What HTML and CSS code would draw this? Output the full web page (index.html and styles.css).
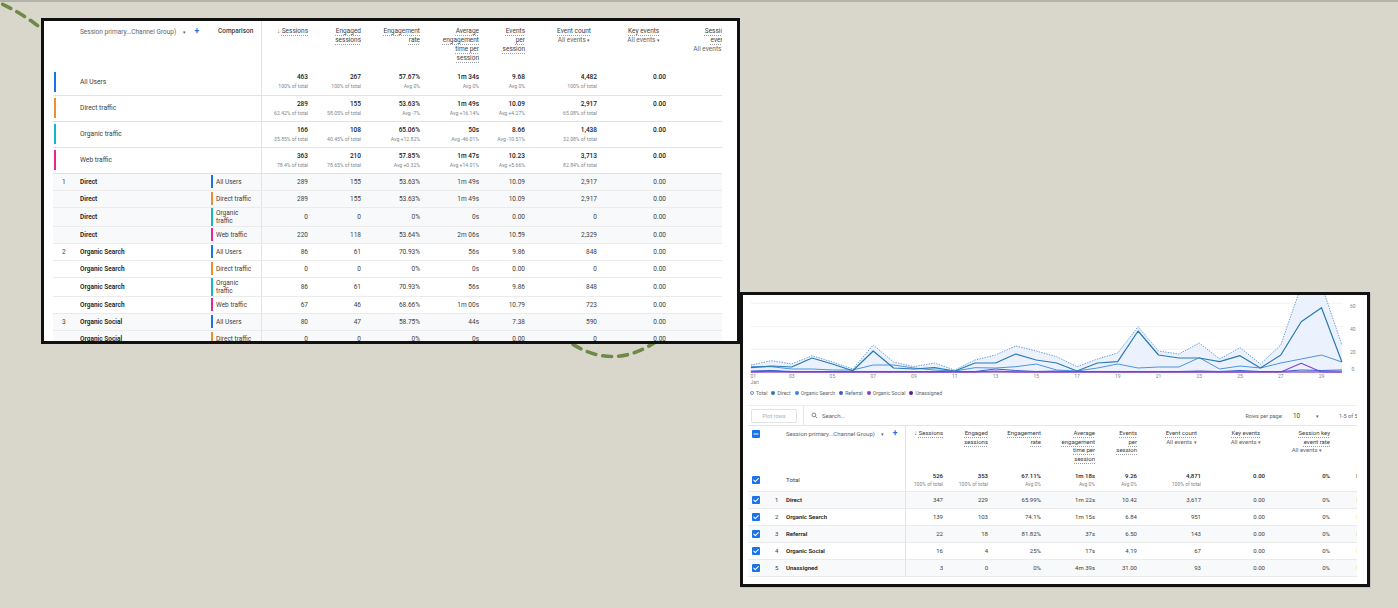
FILE: index.html
```html
<!DOCTYPE html>
<html>
<head>
<meta charset="utf-8">
<link rel="stylesheet" href="styles.css">
</head>
<body>
<div class="stage">
  <svg class="deco" width="1398" height="608" viewBox="0 0 1398 608">
    <path d="M -12 -2 Q 20 10 48 34" class="dash"/>
    <path d="M 560 335 Q 612 378 665 335" class="dash"/>
  </svg>

  <section class="panel panel-left">
    <div class="lt-wrap">
      <table class="lt">
        <colgroup>
          <col class="lw22"><col class="lw133"><col class="lw53"><col class="lw51"><col class="lw53"><col class="lw59"><col class="lw59"><col class="lw46"><col class="lw72"><col class="lw69"><col class="lw69">
        </colgroup>
        <thead>
          <tr class="hd">
            <th></th>
            <th class="dimh">Session primary...Channel Group) <span class="caret">▾</span> <span class="plus">+</span></th>
            <th class="cmph">Comparison</th>
            <th class="num dv"><span class="arr">↓</span> <span class="u">Sessions</span></th>
            <th class="num"><span class="u">Engaged</span><br><span class="u">sessions</span></th>
            <th class="num"><span class="u">Engagement</span><br><span class="u">rate</span></th>
            <th class="num"><span class="u">Average</span><br><span class="u">engagement</span><br><span class="u">time per</span><br><span class="u">session</span></th>
            <th class="num"><span class="u">Events</span><br><span class="u">per</span><br><span class="u">session</span></th>
            <th class="num"><span class="ddh"><span class="u">Event count</span><br><span class="dd">All events <span class="caret">▾</span></span></span></th>
            <th class="num"><span class="ddh"><span class="u">Key events</span><br><span class="dd">All events <span class="caret">▾</span></span></span></th>
            <th class="num lastc"><span class="u">Session key</span><br><span class="u">event rate</span><br><span class="dd ddr">All events <span class="caret">▾</span></span></th>
          </tr>
        </thead>
        <tbody>
          <tr class="sum">
            <td><span class="cbar k-blue"></span></td><td class="nm">All Users</td><td></td>
            <td class="num dv"><div class="v">463</div><div class="s">100% of total</div></td>
            <td class="num"><div class="v">267</div><div class="s">100% of total</div></td>
            <td class="num"><div class="v">57.67%</div><div class="s">Avg 0%</div></td>
            <td class="num"><div class="v">1m 34s</div><div class="s">Avg 0%</div></td>
            <td class="num"><div class="v">9.68</div><div class="s">Avg 0%</div></td>
            <td class="num"><div class="v">4,482</div><div class="s">100% of total</div></td>
            <td class="num"><div class="v">0.00</div></td><td></td>
          </tr>
          <tr class="sum">
            <td><span class="cbar k-orange"></span></td><td class="nm">Direct traffic</td><td></td>
            <td class="num dv"><div class="v">289</div><div class="s">62.42% of total</div></td>
            <td class="num"><div class="v">155</div><div class="s">58.05% of total</div></td>
            <td class="num"><div class="v">53.63%</div><div class="s">Avg -7%</div></td>
            <td class="num"><div class="v">1m 49s</div><div class="s">Avg +16.14%</div></td>
            <td class="num"><div class="v">10.09</div><div class="s">Avg +4.27%</div></td>
            <td class="num"><div class="v">2,917</div><div class="s">65.08% of total</div></td>
            <td class="num"><div class="v">0.00</div></td><td></td>
          </tr>
          <tr class="sum">
            <td><span class="cbar k-teal"></span></td><td class="nm">Organic traffic</td><td></td>
            <td class="num dv"><div class="v">166</div><div class="s">35.85% of total</div></td>
            <td class="num"><div class="v">108</div><div class="s">40.45% of total</div></td>
            <td class="num"><div class="v">65.06%</div><div class="s">Avg +12.82%</div></td>
            <td class="num"><div class="v">50s</div><div class="s">Avg -46.01%</div></td>
            <td class="num"><div class="v">8.66</div><div class="s">Avg -10.51%</div></td>
            <td class="num"><div class="v">1,438</div><div class="s">32.08% of total</div></td>
            <td class="num"><div class="v">0.00</div></td><td></td>
          </tr>
          <tr class="sum">
            <td><span class="cbar k-pink"></span></td><td class="nm">Web traffic</td><td></td>
            <td class="num dv"><div class="v">363</div><div class="s">78.4% of total</div></td>
            <td class="num"><div class="v">210</div><div class="s">78.65% of total</div></td>
            <td class="num"><div class="v">57.85%</div><div class="s">Avg +0.32%</div></td>
            <td class="num"><div class="v">1m 47s</div><div class="s">Avg +14.01%</div></td>
            <td class="num"><div class="v">10.23</div><div class="s">Avg +5.66%</div></td>
            <td class="num"><div class="v">3,713</div><div class="s">82.84% of total</div></td>
            <td class="num"><div class="v">0.00</div></td><td></td>
          </tr>

          <tr class="det g">
            <td class="ix">1</td><td class="dn">Direct</td><td><div class="cmp k-blue">All Users</div></td>
            <td class="num dv">289</td><td class="num">155</td><td class="num">53.63%</td><td class="num">1m 49s</td><td class="num">10.09</td><td class="num">2,917</td><td class="num">0.00</td><td></td>
          </tr>
          <tr class="det g">
            <td></td><td class="dn">Direct</td><td><div class="cmp k-orange">Direct traffic</div></td>
            <td class="num dv">289</td><td class="num">155</td><td class="num">53.63%</td><td class="num">1m 49s</td><td class="num">10.09</td><td class="num">2,917</td><td class="num">0.00</td><td></td>
          </tr>
          <tr class="det g">
            <td></td><td class="dn">Direct</td><td><div class="cmp two k-teal">Organic<br>traffic</div></td>
            <td class="num dv">0</td><td class="num">0</td><td class="num">0%</td><td class="num">0s</td><td class="num">0.00</td><td class="num">0</td><td class="num">0.00</td><td></td>
          </tr>
          <tr class="det g">
            <td></td><td class="dn">Direct</td><td><div class="cmp k-pink">Web traffic</div></td>
            <td class="num dv">220</td><td class="num">118</td><td class="num">53.64%</td><td class="num">2m 06s</td><td class="num">10.59</td><td class="num">2,329</td><td class="num">0.00</td><td></td>
          </tr>
          <tr class="det">
            <td class="ix">2</td><td class="dn">Organic Search</td><td><div class="cmp k-blue">All Users</div></td>
            <td class="num dv">86</td><td class="num">61</td><td class="num">70.93%</td><td class="num">56s</td><td class="num">9.86</td><td class="num">848</td><td class="num">0.00</td><td></td>
          </tr>
          <tr class="det">
            <td></td><td class="dn">Organic Search</td><td><div class="cmp k-orange">Direct traffic</div></td>
            <td class="num dv">0</td><td class="num">0</td><td class="num">0%</td><td class="num">0s</td><td class="num">0.00</td><td class="num">0</td><td class="num">0.00</td><td></td>
          </tr>
          <tr class="det">
            <td></td><td class="dn">Organic Search</td><td><div class="cmp two k-teal">Organic<br>traffic</div></td>
            <td class="num dv">86</td><td class="num">61</td><td class="num">70.93%</td><td class="num">56s</td><td class="num">9.86</td><td class="num">848</td><td class="num">0.00</td><td></td>
          </tr>
          <tr class="det">
            <td></td><td class="dn">Organic Search</td><td><div class="cmp k-pink">Web traffic</div></td>
            <td class="num dv">67</td><td class="num">46</td><td class="num">68.66%</td><td class="num">1m 00s</td><td class="num">10.79</td><td class="num">723</td><td class="num">0.00</td><td></td>
          </tr>
          <tr class="det g">
            <td class="ix">3</td><td class="dn">Organic Social</td><td><div class="cmp k-blue">All Users</div></td>
            <td class="num dv">80</td><td class="num">47</td><td class="num">58.75%</td><td class="num">44s</td><td class="num">7.38</td><td class="num">590</td><td class="num">0.00</td><td></td>
          </tr>
          <tr class="det g">
            <td></td><td class="dn">Organic Social</td><td><div class="cmp k-orange">Direct traffic</div></td>
            <td class="num dv">0</td><td class="num">0</td><td class="num">0%</td><td class="num">0s</td><td class="num">0.00</td><td class="num">0</td><td class="num">0.00</td><td></td>
          </tr>
        </tbody>
      </table>
    </div>
  </section>

  <section class="panel panel-right">
    <svg class="chart" width="624" height="92" viewBox="0 0 624 92">
      <g class="grid">
        <line x1="7.9" y1="8.3" x2="600" y2="8.3"/>
        <line x1="7.9" y1="31.7" x2="600" y2="31.7"/>
        <line x1="7.9" y1="54.3" x2="600" y2="54.3"/>
      </g>
      <polygon class="area" points="7.9,70 28.3,65.7 48.7,69 69,60.7 89.4,67 109.8,74 130.2,50 150.6,67 170.9,71.7 191.3,68 211.7,75 232.1,65 252.5,60 272.8,51 293.2,56 313.6,61.7 334,71.7 354.4,64 374.7,58 395.1,31.7 415.5,56 435.9,59 456.3,48 476.6,64 497,52.7 517.4,69 537.8,50 558.2,-9 578.5,-10 598.9,50 598.9,77 7.9,77"/>
      <polyline class="l-unas" points="7.9,77 598.9,77"/>
      <polyline class="l-soc" points="7.9,77 28.3,76 48.7,77 232.1,77 252.5,76 272.8,77 537.8,77 558.2,68.3 578.5,77 598.9,77"/>
      <polyline class="l-ref" points="7.9,76 28.3,75.5 48.7,76.5 69,76.5 89.4,76.5 109.8,76.5 130.2,76.5 150.6,76.5 170.9,76.5 191.3,76.5 211.7,76.5 232.1,76.5 252.5,74 272.8,75.5 293.2,76.5 313.6,76 334,76.5 354.4,76.5 374.7,76.5 395.1,76.5 415.5,76.5 435.9,76.5 456.3,76 476.6,76.5 497,75.5 517.4,76.5 537.8,76.5 558.2,75 578.5,75.5 598.9,75"/>
      <polyline class="l-org" points="7.9,71.7 28.3,71.7 48.7,74 69,74 89.4,75 109.8,75 130.2,70 150.6,70 170.9,73 191.3,75 211.7,76 232.1,72.7 252.5,73 272.8,71.7 293.2,69 313.6,75 334,76 354.4,73 374.7,69 395.1,73 415.5,72 435.9,72 456.3,62.7 476.6,74 497,71 517.4,73 537.8,68 558.2,64 578.5,60 598.9,67"/>
      <polyline class="l-dir" points="7.9,72.7 28.3,71 48.7,72 69,63 89.4,69 109.8,75.7 130.2,56 150.6,73 170.9,74 191.3,72.7 211.7,76 232.1,68 252.5,68 272.8,59 293.2,65 313.6,68 334,76 354.4,68 374.7,66.7 395.1,36 415.5,60 435.9,63 456.3,63 476.6,66.7 497,60.7 517.4,73 537.8,60 558.2,26.7 578.5,12.7 598.9,67"/>
      <polyline class="l-tot" points="7.9,70 28.3,65.7 48.7,69 69,60.7 89.4,67 109.8,74 130.2,50 150.6,67 170.9,71.7 191.3,68 211.7,75 232.1,65 252.5,60 272.8,51 293.2,56 313.6,61.7 334,71.7 354.4,64 374.7,58 395.1,31.7 415.5,56 435.9,59 456.3,48 476.6,64 497,52.7 517.4,69 537.8,50 558.2,-9 578.5,-10 598.9,50"/>
      <g class="ax">
        <text x="7.5" y="83">01</text>
        <text x="7.5" y="89">Jan</text>
        <text class="mid" x="48.7" y="83">03</text>
        <text class="mid" x="89.4" y="83">05</text>
        <text class="mid" x="130.2" y="83">07</text>
        <text class="mid" x="170.9" y="83">09</text>
        <text class="mid" x="211.7" y="83">11</text>
        <text class="mid" x="252.5" y="83">13</text>
        <text class="mid" x="293.2" y="83">15</text>
        <text class="mid" x="334" y="83">17</text>
        <text class="mid" x="374.7" y="83">19</text>
        <text class="mid" x="415.5" y="83">21</text>
        <text class="mid" x="456.3" y="83">23</text>
        <text class="mid" x="497" y="83">25</text>
        <text class="mid" x="537.8" y="83">27</text>
        <text class="mid" x="578.5" y="83">29</text>
        <text x="607" y="13">60</text>
        <text x="607" y="36">40</text>
        <text x="607" y="59">20</text>
        <text x="608.5" y="76">0</text>
      </g>
    </svg>

    <div class="legend">
      <span class="lg"><span class="dot ring"></span>Total</span>
      <span class="lg"><span class="dot d-dir"></span>Direct</span>
      <span class="lg"><span class="dot d-org"></span>Organic Search</span>
      <span class="lg"><span class="dot d-ref"></span>Referral</span>
      <span class="lg"><span class="dot d-soc"></span>Organic Social</span>
      <span class="lg"><span class="dot d-unas"></span>Unassigned</span>
    </div>

    <div class="toolbar">
      <span class="plot">Plot rows</span>
      <span class="tsep"></span>
      <svg class="sicon" width="7" height="7" viewBox="0 0 24 24"><circle cx="10" cy="10" r="6.5"/><line x1="15" y1="15" x2="21" y2="21"/></svg>
      <span class="search">Search...</span>
      <span class="pager">
        <span class="rpp">Rows per page:</span>
        <span class="rnum">10</span>
        <span class="caret pc">▾</span>
        <span class="range">1-5 of 5</span>
      </span>
    </div>

    <div class="rt-wrap">
      <table class="rt">
        <colgroup>
          <col class="rw18"><col class="rw16"><col class="rw123"><col class="rw42"><col class="rw45"><col class="rw53"><col class="rw54"><col class="rw42"><col class="rw64"><col class="rw64"><col class="rw65"><col class="rw46">
        </colgroup>
        <thead>
          <tr class="hd">
            <th class="cbc"><svg class="cb" width="8" height="8" viewBox="0 0 8 8"><rect width="8" height="8" rx="1"/><path d="M2 4 H6"/></svg></th>
            <th></th>
            <th class="dimh">Session primary...Channel Group) <span class="caret">▾</span> <span class="plus">+</span></th>
            <th class="num dv"><span class="arr">↓</span> <span class="u">Sessions</span></th>
            <th class="num"><span class="u">Engaged</span><br><span class="u">sessions</span></th>
            <th class="num"><span class="u">Engagement</span><br><span class="u">rate</span></th>
            <th class="num"><span class="u">Average</span><br><span class="u">engagement</span><br><span class="u">time per</span><br><span class="u">session</span></th>
            <th class="num"><span class="u">Events</span><br><span class="u">per</span><br><span class="u">session</span></th>
            <th class="num"><span class="ddh"><span class="u">Event count</span><br><span class="dd">All events <span class="caret">▾</span></span></span></th>
            <th class="num"><span class="ddh"><span class="u">Key events</span><br><span class="dd">All events <span class="caret">▾</span></span></span></th>
            <th class="num"><span class="u">Session key</span><br><span class="u">event rate</span><br><span class="dd ddr">All events <span class="caret">▾</span></span></th>
            <th class="num clipc"><span class="u">Total</span><br><span class="u">revenue</span></th>
          </tr>
        </thead>
        <tbody>
          <tr class="tot">
            <td class="cbc"><svg class="cb" width="8" height="8" viewBox="0 0 8 8"><rect width="8" height="8" rx="1"/><path d="M1.8 4.1 L3.3 5.6 L6.3 2.6"/></svg></td>
            <td></td><td class="nm">Total</td>
            <td class="num dv"><div class="v">526</div><div class="s">100% of total</div></td>
            <td class="num"><div class="v">353</div><div class="s">100% of total</div></td>
            <td class="num"><div class="v">67.11%</div><div class="s">Avg 0%</div></td>
            <td class="num"><div class="v">1m 18s</div><div class="s">Avg 0%</div></td>
            <td class="num"><div class="v">9.26</div><div class="s">Avg 0%</div></td>
            <td class="num"><div class="v">4,871</div><div class="s">100% of total</div></td>
            <td class="num"><div class="v">0.00</div></td>
            <td class="num"><div class="v">0%</div></td>
            <td class="lc"><div class="v">$0.00</div></td>
          </tr>
          <tr class="row g">
            <td class="cbc"><svg class="cb" width="8" height="8" viewBox="0 0 8 8"><rect width="8" height="8" rx="1"/><path d="M1.8 4.1 L3.3 5.6 L6.3 2.6"/></svg></td>
            <td class="ix">1</td><td class="dn">Direct</td>
            <td class="num dv">347</td><td class="num">229</td><td class="num">65.99%</td><td class="num">1m 22s</td><td class="num">10.42</td><td class="num">3,617</td><td class="num">0.00</td><td class="num">0%</td><td class="lc mk">$0.00</td>
          </tr>
          <tr class="row">
            <td class="cbc"><svg class="cb" width="8" height="8" viewBox="0 0 8 8"><rect width="8" height="8" rx="1"/><path d="M1.8 4.1 L3.3 5.6 L6.3 2.6"/></svg></td>
            <td class="ix">2</td><td class="dn">Organic Search</td>
            <td class="num dv">139</td><td class="num">103</td><td class="num">74.1%</td><td class="num">1m 15s</td><td class="num">6.84</td><td class="num">951</td><td class="num">0.00</td><td class="num">0%</td><td class="lc mk">$0.00</td>
          </tr>
          <tr class="row g">
            <td class="cbc"><svg class="cb" width="8" height="8" viewBox="0 0 8 8"><rect width="8" height="8" rx="1"/><path d="M1.8 4.1 L3.3 5.6 L6.3 2.6"/></svg></td>
            <td class="ix">3</td><td class="dn">Referral</td>
            <td class="num dv">22</td><td class="num">18</td><td class="num">81.82%</td><td class="num">37s</td><td class="num">6.50</td><td class="num">143</td><td class="num">0.00</td><td class="num">0%</td><td class="lc mk">$0.00</td>
          </tr>
          <tr class="row">
            <td class="cbc"><svg class="cb" width="8" height="8" viewBox="0 0 8 8"><rect width="8" height="8" rx="1"/><path d="M1.8 4.1 L3.3 5.6 L6.3 2.6"/></svg></td>
            <td class="ix">4</td><td class="dn">Organic Social</td>
            <td class="num dv">16</td><td class="num">4</td><td class="num">25%</td><td class="num">17s</td><td class="num">4.19</td><td class="num">67</td><td class="num">0.00</td><td class="num">0%</td><td class="lc mk">$0.00</td>
          </tr>
          <tr class="row g">
            <td class="cbc"><svg class="cb" width="8" height="8" viewBox="0 0 8 8"><rect width="8" height="8" rx="1"/><path d="M1.8 4.1 L3.3 5.6 L6.3 2.6"/></svg></td>
            <td class="ix">5</td><td class="dn">Unassigned</td>
            <td class="num dv">3</td><td class="num">0</td><td class="num">0%</td><td class="num">4m 39s</td><td class="num">31.00</td><td class="num">93</td><td class="num">0.00</td><td class="num">0%</td><td class="lc mk">$0.00</td>
          </tr>
        </tbody>
      </table>
    </div>
  </section>
</div>
</body>
</html>
```

FILE: styles.css
```css
* { box-sizing: border-box; }
html, body { margin: 0; padding: 0; }
body {
  background: #d9d7cb;
  font-family: Roboto, "Noto Sans", "Liberation Sans", sans-serif;
  color: #3c4043;
  overflow: hidden;
}
.stage {
  position: relative;
  width: 1398px;
  height: 608px;
  overflow: hidden;
}
.stage::before {
  content: "";
  position: absolute;
  left: 0; top: 0; right: 0;
  height: 2px;
  background: #b4b3ab;
}
.deco { position: absolute; left: 0; top: 0; z-index: 0; }
.dash {
  fill: none;
  stroke: #6f8a48;
  stroke-width: 3.6;
  stroke-linecap: round;
  stroke-dasharray: 9 7;
}

.panel {
  position: absolute;
  background: #fff;
  border: 3px solid #111;
  overflow: hidden;
}
.panel-left { left: 41px; top: 18px; width: 699px; height: 326px; z-index: 1; padding-left: 9px; }
.panel-right { left: 740px; top: 292px; width: 630px; height: 295px; z-index: 2; box-shadow: 1px 1px 0 #c2c1b9; }

table { border-collapse: collapse; table-layout: fixed; }
th, td {
  padding: 0 4px;
  font-size: 6.5px;
  white-space: nowrap;
  overflow: hidden;
  text-align: left;
}
th { font-weight: 400; vertical-align: top; color: #3c4043; }
.num { text-align: right; }
.dv { border-left: 1px solid #e3e3e3; }
.u {
  text-decoration: underline dotted #9aa0a6;
  text-underline-offset: 1.6px;
}
.dd { color: #5f6368; }
.ddh { display: inline-block; text-align: center; margin-right: 6px; }
.ddr { display: inline-block; padding-right: 8px; }
.caret { font-size: 5px; color: #5f6368; }
.plus { color: #1a73e8; font-weight: 700; font-size: 8.5px; margin-left: 7px; }
.arr { font-size: 6.5px; color: #5f6368; }
.dimh { color: #5f6368; }
.dimh .caret { margin-left: 5px; }
.v { font-weight: 500; color: #202124; line-height: 8px; }
.s { font-size: 5.1px; color: #80868b; line-height: 10px; }
.nm { vertical-align: middle; font-size: 6.7px; color: #3c4043; }
.dn { font-weight: 600; color: #202124; }
.ix { color: #3c4043; padding-left: 9px; }

.k-blue { --k: #1a73e8; }
.k-orange { --k: #f08c2e; }
.k-teal { --k: #12b5cb; }
.k-pink { --k: #e52592; }

.lt-wrap { width: 669px; overflow: hidden; }
.lt { width: 686px; }
.lw22 { width: 22px; } .lw133 { width: 133px; } .lw53 { width: 53px; } .lw51 { width: 51px; }
.lw59 { width: 59px; } .lw46 { width: 46px; } .lw72 { width: 72px; } .lw69 { width: 69px; }
.lt tr.hd th { height: 48px; padding-top: 5.5px; line-height: 9px; }
.lt tr.hd th.lastc { padding-right: 0; }
.lt tr.hd th.lastc .ddr { padding-right: 13px; }
.lt .dimh { padding-left: 5px; padding-top: 7px; }
.lt .cmph { font-weight: 500; padding-left: 10px; color: #3c4043; }
.lt tr.sum td { height: 26px; border-bottom: 1px solid #e3e3e3; vertical-align: top; padding-top: 4px; }
.lt tr.sum td.nm { vertical-align: middle; padding-top: 0; padding-left: 5px; }
.lt tr.sum td:first-child { vertical-align: middle; padding: 0 0 0 1px; }
.cbar { display: block; width: 2px; height: 20px; background: var(--k); }
.lt tr.det td { height: 17px; border-bottom: 1px solid #ebebeb; vertical-align: middle; background: #fff; }
.lt tr.det.g td { background: #f8f9fa; }
.lt tr.det td.ix { padding-left: 9px; }
.lt tr.det td.dn { padding-left: 5px; }
.lt tr.det td:nth-child(3) { padding-left: 3px; padding-right: 2px; }
.cmp {
  border-left: 2px solid var(--k);
  padding: 2.5px 0 2.5px 3px;
  line-height: 8px;
  color: #3c4043;
}
.cmp.two { padding-top: 1px; padding-bottom: 1px; }

.chart { display: block; }
.grid line { stroke: #eeeeee; stroke-width: 0.8; }
.area { fill: #e8f0fe; opacity: 0.85; }
.chart polyline { fill: none; stroke-linejoin: round; }
.l-tot { stroke: #6a9fd8; stroke-width: 1; stroke-dasharray: 1.4 1.2; }
.l-dir { stroke: #2a7aaf; stroke-width: 1.2; }
.l-org { stroke: #4d92e0; stroke-width: 1; }
.l-ref { stroke: #3f5ad0; stroke-width: 1; }
.l-soc { stroke: #8b3fd0; stroke-width: 1.1; }
.l-unas { stroke: #5c1a9a; stroke-width: 1.2; }
.ax text { font-family: Roboto, sans-serif; font-size: 5px; fill: #80868b; }
.ax text.mid { text-anchor: middle; }

.legend {
  height: 12px;
  padding-left: 7px;
  display: flex;
  align-items: center;
  gap: 4px;
  font-size: 5.1px;
  color: #5f6368;
  margin-bottom: 6px;
}
.lg { display: inline-flex; align-items: center; gap: 2px; }
.dot { width: 4px; height: 4px; border-radius: 50%; display: inline-block; }
.ring { border: 0.8px solid #5e97d4; background: #fff; }
.d-dir { background: #2a7aaf; }
.d-org { background: #3b86e0; }
.d-ref { background: #3f5ad0; }
.d-soc { background: #8b3fd0; }
.d-unas { background: #5c1a9a; }

.toolbar {
  margin-left: 5px;
  width: 609px;
  height: 21px;
  border-top: 1px solid #eeeeee;
  border-bottom: 1px solid #e6e6e6;
  display: flex;
  align-items: center;
  overflow: hidden;
  white-space: nowrap;
}
.plot {
  margin-left: 3px;
  width: 46px;
  height: 14px;
  border: 1px solid #e3e3e3;
  border-radius: 2px;
  font-size: 5.5px;
  color: #aab0b5;
  display: flex;
  align-items: center;
  justify-content: center;
}
.tsep { align-self: stretch; width: 1px; background: #e6e6e6; margin-left: 6px; }
.sicon { margin-left: 7px; fill: none; stroke: #5f6368; stroke-width: 2.6; }
.search { margin-left: 4px; font-size: 6px; color: #5f6368; }
.pager { margin-left: auto; display: flex; align-items: center; margin-right: -22px; font-size: 5.5px; color: #5f6368; }
.rpp { margin-right: 10px; }
.rnum { font-size: 6.3px; color: #3c4043; }
.pc { margin-left: 16px; }
.range { margin-left: 20px; width: 40px; }

.rt-wrap { margin-left: 5px; width: 609px; overflow: hidden; }
.rt { width: 632px; }
.rt th, .rt td { font-size: 6px; }
.rt .s { font-size: 5px; }
.rt .nm { font-size: 6.2px; }
.rw18 { width: 18px; } .rw16 { width: 16px; } .rw123 { width: 123px; } .rw42 { width: 42px; }
.rw45 { width: 45px; } .rw53 { width: 53px; } .rw54 { width: 54px; } .rw64 { width: 64px; }
.rw65 { width: 65px; } .rw46 { width: 46px; }
.rt tr.hd th { height: 44px; padding-top: 3px; line-height: 8.6px; }
.rt .dimh { padding-top: 5px; }
.rt .ddh { margin-right: 4px; }
.rt .cbc { padding: 0 0 0 4px; }
.rt tr.hd th.cbc { padding-top: 4px; }
.cb { display: block; }
.cb rect { fill: #1a73e8; }
.cb path { fill: none; stroke: #fff; stroke-width: 1.1; stroke-linecap: round; stroke-linejoin: round; }
.clipc { padding-right: 0; }
.rt tr.tot td { height: 21px; vertical-align: top; padding-top: 2px; }
.rt tr.tot td.cbc, .rt tr.tot td.nm { vertical-align: middle; padding-top: 0; }
.rt tr.tot td .s { line-height: 9px; }
.rt tr.row td { height: 17px; vertical-align: middle; border-top: 1px solid #ebebeb; background: #fff; }
.rt tr.row.g td { background: #f8f9fa; }
.rt tr.row:last-child td { border-bottom: 1px solid #ebebeb; }
.rt td.lc { padding-left: 22px; }
.rt td.mk { color: #e9c46a; }
```
